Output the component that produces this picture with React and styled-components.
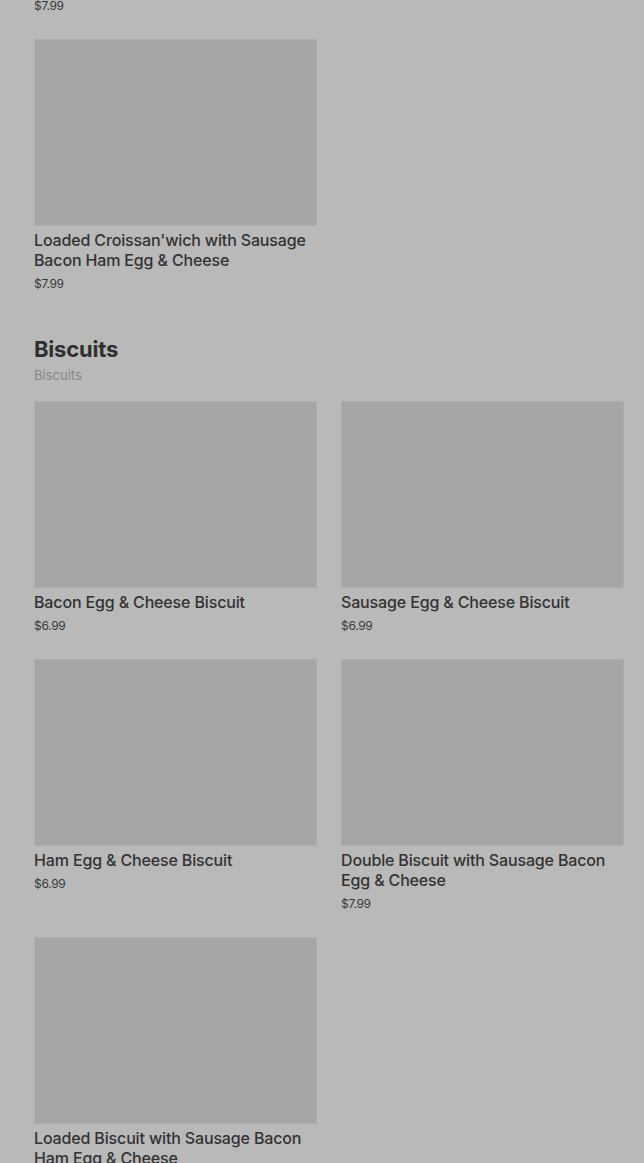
import React from "react";
import styled, { createGlobalStyle } from "styled-components";

const Global = createGlobalStyle`
	html, body {
		margin: 0;
		padding: 0;
		background: #b9b9b9;
		font-family: Inter, "Noto Sans", sans-serif;
		overflow: hidden;
	}
`;

const Page = styled.div`
	padding: 0 20px 0 34px;
	margin-top: -219px;
`;

const Section = styled.section`
	display: flex;
	flex-flow: column nowrap;
	& + & {
		margin-top: 42px;
	}
`;

const Heading = styled.h2`
	margin: 0;
	font-size: 22px;
	line-height: 28px;
	font-weight: 700;
	color: #2f2f2f;
	letter-spacing: -0.2px;
`;

const Subtitle = styled.p`
	margin: 2px 0 16px;
	font-size: 13px;
	line-height: 20px;
	color: #888;
`;

const Grid = styled.div`
	display: grid;
	grid-template-columns: ${p => (p.$cols === 1 ? "283px" : "283px 283px")};
	column-gap: 24px;
	row-gap: 24px;
	align-items: start;
`;

const Card = styled.div`
	display: flex;
	flex-flow: column nowrap;
`;

const Thumb = styled.div`
	height: 187px;
	background: #a6a6a6;
	box-shadow: inset 0 0 0 1px #adadad;
	border-radius: 2px;
`;

const Name = styled.h3`
	margin: 4px 0 0;
	font-size: 16px;
	line-height: 20px;
	font-weight: 500;
	color: #333;
	letter-spacing: -0.15px;
`;

const Price = styled.p`
	margin: 5px 0 0;
	font-size: 12px;
	line-height: 18px;
	color: #3a3a3a;
	letter-spacing: -0.3px;
`;

const sections = [
	{
		title: "Croissan'wich",
		sub: "Croissan'wich",
		hideHead: true,
		cols: 1,
		items: [
			{ name: "Double Croissan'wich with Sausage", price: "$7.99" },
			{ name: "Loaded Croissan'wich with Sausage Bacon Ham Egg & Cheese", price: "$7.99" },
		],
	},
	{
		title: "Biscuits",
		sub: "Biscuits",
		cols: 2,
		items: [
			{ name: "Bacon Egg & Cheese Biscuit", price: "$6.99" },
			{ name: "Sausage Egg & Cheese Biscuit", price: "$6.99" },
			{ name: "Ham Egg & Cheese Biscuit", price: "$6.99" },
			{ name: "Double Biscuit with Sausage Bacon Egg & Cheese", price: "$7.99" },
			{ name: "Loaded Biscuit with Sausage Bacon Ham Egg & Cheese", price: "$7.99" },
		],
	},
];

const App = () => (
	<>
		<Global />
		<Page>
			{sections.map(s => (
				<Section key={s.title}>
					{!s.hideHead && (
						<>
							<Heading>{s.title}</Heading>
							<Subtitle>{s.sub}</Subtitle>
						</>
					)}
					<Grid $cols={s.cols}>
						{s.items.map(item => (
							<Card key={item.name}>
								<Thumb />
								<Name>{item.name}</Name>
								<Price>{item.price}</Price>
							</Card>
						))}
					</Grid>
				</Section>
			))}
		</Page>
	</>
);

export default App;
